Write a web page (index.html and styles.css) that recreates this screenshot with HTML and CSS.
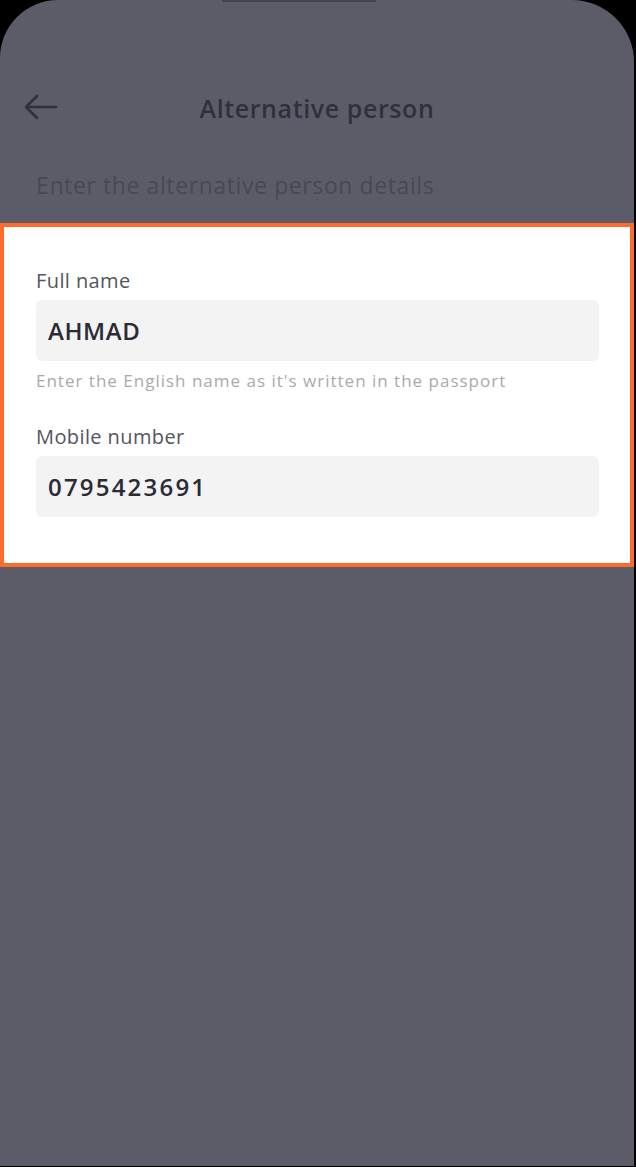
FILE: index.html
```html
<!DOCTYPE html>
<html lang="en">
<head>
    <meta charset="UTF-8">
    <meta name="viewport" content="width=device-width, initial-scale=1.0">
    <title>Alternative person</title>
    <link rel="stylesheet" href="styles.css">
</head>
<body>
    <div class="screen">
        <div class="notch"></div>
        <div class="header">
            <button class="back" aria-label="Back">
                <svg width="34" height="26" viewBox="0 0 34 26" fill="none" stroke="#30303b" stroke-width="2.6" stroke-linecap="round" stroke-linejoin="round">
                    <path d="M32 13H3"/>
                    <path d="M13 2L2 13l11 11"/>
                </svg>
            </button>
            <h1>Alternative person</h1>
        </div>
        <p class="subtitle">Enter the alternative person details</p>

        <div class="form-card">
            <div class="field">
                <label for="fullName">Full name</label>
                <div class="input" id="fullName">AHMAD</div>
                <div class="hint">Enter the English name as it's written in the passport</div>
            </div>
            <div class="field">
                <label for="mobile">Mobile number</label>
                <div class="input digits" id="mobile">0795423691</div>
            </div>
        </div>
    </div>
</body>
</html>
```

FILE: styles.css
```css
html, body {
    margin: 0;
    padding: 0;
    background: #000;
}
body {
    font-family: "Open Sans", "Noto Sans", sans-serif;
    width: 636px;
    height: 1167px;
    overflow: hidden;
}
.screen {
    position: relative;
    width: 634px;
    height: 1166px;
    background: #5c5c68;
    border-radius: 58px 62px 0 0;
    overflow: hidden;
}
.notch {
    position: absolute;
    top: 0;
    left: 222px;
    width: 154px;
    height: 2px;
    background: #45454f;
}
.header {
    position: relative;
    height: 44px;
    padding-top: 86px;
    display: flex;
    align-items: center;
    justify-content: center;
}
.back {
    position: absolute;
    left: 24px;
    top: 94px;
    background: none;
    border: none;
    padding: 0;
    display: flex;
}
.header h1 {
    margin: 0;
    font-size: 25px;
    font-weight: 600;
    color: #30303b;
    letter-spacing: 0.6px;
}
.subtitle {
    margin: 41px 0 0 36px;
    font-size: 23px;
    color: #484854;
    line-height: 28px;
    letter-spacing: 0.6px;
}
.form-card {
    margin-top: 24px;
    width: 634px;
    height: 344px;
    background: #fff;
    border: 4px solid #ff6b2c;
    padding: 42px 32px 0 32px;
    box-sizing: border-box;
}
.field {
    display: flex;
    flex-direction: column;
}
.field + .field {
    margin-top: 34px;
}
.field label {
    font-size: 20px;
    color: #55555f;
    line-height: 24px;
    margin-bottom: 7px;
    letter-spacing: 0.4px;
}
.input {
    width: 563px;
    height: 61px;
    box-sizing: border-box;
    background: #f3f3f4;
    border-radius: 6px;
    padding: 0 12px;
    display: flex;
    align-items: center;
    font-size: 24px;
    font-weight: 600;
    color: #2b2b36;
    letter-spacing: 0.6px;
}
.input.digits {
    letter-spacing: 2.2px;
}
.hint {
    margin-top: 10px;
    font-size: 17px;
    color: #a9a9ad;
    letter-spacing: 1px;
    line-height: 20px;
}
```
